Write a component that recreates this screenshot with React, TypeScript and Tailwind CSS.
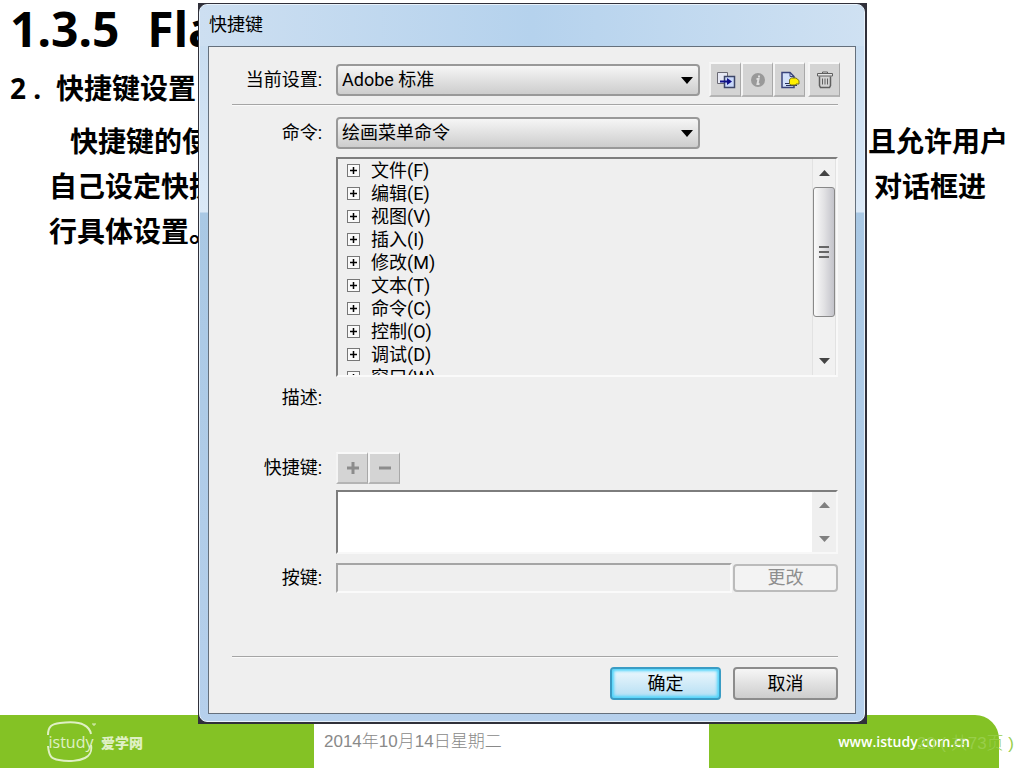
import React, { useState } from "react";

const MENUS = [
  "文件(F)",
  "编辑(E)",
  "视图(V)",
  "插入(I)",
  "修改(M)",
  "文本(T)",
  "命令(C)",
  "控制(O)",
  "调试(D)",
  "窗口(W)",
];

const LABEL = "w-[91px] mr-[13px] pr-px shrink-0 text-right whitespace-nowrap";

const Slide = () => (
  <main className="font-['Noto_Sans','Noto_Sans_CJK_SC',sans-serif] text-[28px] leading-[45px] font-bold text-black whitespace-pre">
    <h1 className="flex gap-7 pl-[10px] text-5xl leading-[58px]">
      <span>1.3.5</span>
      <span>Fla</span>
    </h1>
    <h2 className="mt-2 flex pl-[10px]">
      <span className="w-[46px]">2 .</span>
      <span>快捷键设置</span>
    </h2>
    <div className="mt-2 flex justify-between pl-[70px] pr-4">
      <span>快捷键的使</span>
      <span>且允许用户</span>
    </div>
    <div className="flex justify-between pl-[49px] pr-[38px]">
      <span>自己设定快捷</span>
      <span>对话框进</span>
    </div>
    <div className="pl-[49px]">行具体设置。</div>
  </main>
);

const Logo = () => (
  <div className="ml-[45px] flex items-center text-[#dff0c4]">
    <div className="relative flex h-[42px] w-[52px] items-center justify-center">
      <svg
        className="absolute inset-0"
        width="52"
        height="42"
        viewBox="0 0 52 42"
        fill="none"
        stroke="currentColor"
      >
        <path
          strokeWidth="2"
          d="M3 14 C3 5 7 3 15 2 C24 1 34 1 39 4 C43 6 45 8 46 13 M3 25 C4 35 6 38 14 39 C23 41 34 40 40 37 C46 34 47 30 46 24"
        />
        <path strokeWidth="1" d="M47 3h4M49 3v2" />
      </svg>
      <span className="font-['Open_Sans',sans-serif] text-base leading-5">
        istudy
      </span>
    </div>
    <span className="ml-1 font-['Noto_Sans_CJK_SC',sans-serif] text-sm font-black">
      爱学网
    </span>
  </div>
);

const Footer = () => (
  <footer className="relative mt-auto flex h-[53px] pr-[25px]">
    <div className="flex w-[314px] items-center bg-[#84c225]">
      <Logo />
    </div>
    <div className="flex flex-1 items-center pl-[10px] font-['Liberation_Sans','Noto_Sans_CJK_SC',sans-serif] text-[17px] font-light text-[#898989]">
      2014年10月14日星期二
    </div>
    <div className="flex w-[290px] items-center justify-end rounded-tr-3xl bg-[#84c225] pr-[29px]">
      <a
        href="#"
        className="font-['Open_Sans',sans-serif] text-sm font-semibold text-white"
      >
        www.istudy.com.cn
      </a>
    </div>
    <span className="absolute right-[10px] bottom-[12px] font-['Liberation_Sans','Noto_Sans_CJK_SC',sans-serif] text-[17px] leading-6 font-light whitespace-pre text-[#98ce4a]">
      20 ( 共73页 )
    </span>
  </footer>
);

const DropDown = ({ id, options }: { id: string; options: string[] }) => (
  <div className="relative">
    <select
      id={id}
      className="block h-8 w-[364px] appearance-none rounded-[4px] border-2 border-[#999] bg-linear-to-b from-[#f6f6f6] to-[#cdcdcd] pl-1 outline-none"
    >
      {options.map((o) => (
        <option key={o}>{o}</option>
      ))}
    </select>
    <svg
      className="pointer-events-none absolute top-[13px] right-[7px]"
      width="12"
      height="7"
      viewBox="0 0 12 7"
    >
      <path d="M0 0h12L6 7z" />
    </svg>
  </div>
);

const ToolButton = ({ label, children, disabled }: any) => (
  <button
    aria-label={label}
    disabled={disabled}
    className="flex h-full w-8 items-center justify-center border-t-2 border-r border-b-2 border-l-2 border-t-[#f8f8f8] border-r-[#a8a8a8] border-b-[#b4b4b4] border-l-[#f4f4f4] bg-[#d4d4d4]"
  >
    {children}
  </button>
);

const Arrow = ({ down, color }: { down?: boolean; color: string }) => (
  <svg width="11" height="6" viewBox="0 0 11 6" fill={color}>
    <path d={down ? "M0 0h11L5.5 6z" : "M0 6h11L5.5 0z"} />
  </svg>
);

const Divider = () => (
  <hr className="h-[2px] border-t border-b border-t-[#a5a5a5] border-b-[#fafafa]" />
);

const CommandTree = () => (
  <div className="mt-2 ml-[104px] flex h-[220px] overflow-hidden border-2 border-t-[#7d7d7d] border-r-[#f8f8f8] border-b-[#fafafa] border-l-[#7d7d7d]">
    <ul className="flex-1 pl-[9px]">
      {MENUS.map((name) => (
        <li key={name}>
          <button className="flex h-[23px] items-center gap-[11px] leading-[23px]">
            <svg width="13" height="13" viewBox="0 0 13 13">
              <rect x="0.5" y="0.5" width="12" height="12" fill="#fafafa" stroke="#777" />
              <path d="M3 6.5h7M6.5 3v7" stroke="#000" strokeWidth="1.5" />
            </svg>
            {name}
          </button>
        </li>
      ))}
    </ul>
    <div className="flex w-6 flex-col items-center border-x border-x-[#e2e2e2] bg-[#f1f1f1]">
      <div className="flex h-7 items-center">
        <Arrow color="#444" />
      </div>
      <div className="flex h-[130px] w-[22px] flex-col items-center justify-center gap-[3px] rounded-[3px] border border-[#888] bg-linear-to-r from-[#fafafa] via-[#e2e2e4] to-[#c3c3ca]">
        <i className="h-[2px] w-[10px] bg-[#666]" />
        <i className="h-[2px] w-[10px] bg-[#666]" />
        <i className="h-[2px] w-[10px] bg-[#666]" />
      </div>
      <div className="mt-auto flex h-7 items-center">
        <Arrow down color="#444" />
      </div>
    </div>
  </div>
);

const ShortcutDialog = () => {
  const [shortcuts, setShortcuts] = useState("");

  return (
    <div className="absolute top-[3px] left-[198px] w-[669px] bg-[#30303a] font-['Roboto','Noto_Sans_CJK_SC',sans-serif] text-lg leading-6 text-black">
      <div
        role="dialog"
        aria-labelledby="dialog-title"
        className="m-px mr-[2px] mb-[2px] rounded-[8px] border border-[#e8f2fb] bg-[linear-gradient(to_bottom,#c4daef_0,#dbe9f7_207px,#a9c8e4_208px,#b6d0ec_100%)] px-2 pb-[7px]"
      >
        <div
          id="dialog-title"
          className="-mx-2 h-[41px] rounded-t-[8px] bg-linear-to-r from-[#cddff1] via-[#b5d2ed] to-[#cfe1f2] pt-2 pl-[9px]"
        >
          快捷键
        </div>
        <div className="border border-[#65707c] bg-[#efefef] pt-[15px] pr-[17px] pb-[13px] pl-[23px]">
          <div className="flex h-[35px] items-center">
            <label htmlFor="preset" className={LABEL}>
              当前设置:
            </label>
            <DropDown id="preset" options={["Adobe 标准"]} />
            <div className="ml-[9px] flex h-[35px]">
              <ToolButton label="直接复制设置">
                <svg width="20" height="18" viewBox="0 0 20 18" fill="none">
                  <path d="M1.5 1.5h10v11h-10z" fill="#e6e8f4" stroke="#6a6a74" />
                  <path d="M8.5 5.5h10v11h-10z" fill="#c9d8fa" stroke="#3d4668" strokeWidth="1.5" />
                  <path d="M4 10.500h9" stroke="#10108a" strokeWidth="2" />
                  <path d="M11 7l5 3.500-5 3.500z" fill="#10108a" />
                </svg>
              </ToolButton>
              <ToolButton label="重命名设置" disabled>
                <svg width="16" height="16" viewBox="0 0 16 16">
                  <circle cx="8" cy="8" r="7" fill="#999" />
                  <path
                    d="M9 3.500v2M6.500 7h2l-1 5h2"
                    fill="none"
                    stroke="#dedede"
                    strokeWidth="2"
                  />
                </svg>
              </ToolButton>
              <ToolButton label="将设置导出为 HTML">
                <svg width="20" height="18" viewBox="0 0 20 18">
                  <path
                    d="M2 1.500h8l4 4v11H2z"
                    fill="#d2e0fa"
                    stroke="#39437c"
                    strokeWidth="1.500"
                  />
                  <path d="M10 1.500v4h4" fill="none" stroke="#39437c" />
                  <path d="M5 12.500h6M6 14.500h11" stroke="#26305e" />
                  <path
                    d="M9.500 8.500l2-1.500h4.500l3 2.500v3.500h-3v1h-5l-1.500-1z"
                    fill="#fff000"
                    stroke="#77721a"
                  />
                </svg>
              </ToolButton>
              <div className="ml-[3px]">
                <ToolButton label="删除设置">
                  <svg
                    width="18"
                    height="18"
                    viewBox="0 0 18 18"
                    fill="none"
                    stroke="#606060"
                  >
                    <path d="M6.500 2.500v-1.500h5v1.500M1.500 5V2.500h15V5z" fill="#e6e6e6" />
                    <path d="M3.500 5.500v9l1 2h9l1-2v-9" strokeWidth="1.500" />
                    <path d="M6.500 7.500v6M9 7.500v6M11.500 7.500v6" />
                  </svg>
                </ToolButton>
              </div>
            </div>
          </div>
          <div className="mt-[7px]">
            <Divider />
          </div>
          <div className="mt-[11px] flex items-center">
            <label htmlFor="commands" className={LABEL}>
              命令:
            </label>
            <DropDown id="commands" options={["绘画菜单命令"]} />
          </div>
          <CommandTree />
          <div className="flex h-[42px] items-center">
            <span className={LABEL}>描述:</span>
          </div>
          <div className="mt-[33px] flex h-8 items-center">
            <label htmlFor="shortcuts" className={LABEL}>
              快捷键:
            </label>
            <ToolButton label="添加快捷键" disabled>
              <svg width="12" height="12" viewBox="0 0 12 12" stroke="#8c8c8c" strokeWidth="3">
                <path d="M0 6h12M6 0v12" />
              </svg>
            </ToolButton>
            <ToolButton label="删除快捷键" disabled>
              <svg width="12" height="12" viewBox="0 0 12 12" stroke="#8c8c8c" strokeWidth="3">
                <path d="M0 6h12" />
              </svg>
            </ToolButton>
          </div>
          <div className="mt-[6px] ml-[104px] flex h-16 border-2 border-t-[#7d7d7d] border-r-[#f8f8f8] border-b-[#f8f8f8] border-l-[#7d7d7d] bg-white">
            <textarea
              id="shortcuts"
              value={shortcuts}
              onChange={(e) => setShortcuts(e.target.value)}
              className="flex-1 resize-none outline-none"
            />
            <div className="flex w-6 flex-col items-center justify-between bg-[#efefef] py-[10px]">
              <Arrow color="#808080" />
              <Arrow down color="#808080" />
            </div>
          </div>
          <div className="mt-[9px] flex h-[30px] items-center">
            <label htmlFor="keys" className={LABEL}>
              按键:
            </label>
            <input
              id="keys"
              disabled
              className="mr-px h-full min-w-0 flex-1 border-2 border-t-[#a5a5a5] border-r-[#fafafa] border-b-[#fafafa] border-l-[#a5a5a5]"
            />
            <button
              disabled
              className="h-7 w-[105px] rounded-[4px] border-2 border-[#bbb] bg-[#f3f3f3] text-[#8e8e8e]"
            >
              更改
            </button>
          </div>
          <div className="mt-[63px]">
            <Divider />
          </div>
          <div className="mt-[9px] flex justify-end gap-3">
            <button className="h-[33px] w-[111px] rounded-[4px] border-2 border-[#3a9cc4] bg-linear-to-b from-[#eef8fd] to-[#b4def3] pt-px shadow-[inset_0_0_3px_2px_#4fd4fb]">
              确定
            </button>
            <button className="h-[33px] w-[105px] rounded-[4px] border-2 border-[#8c8c8c] bg-linear-to-b from-[#f6f6f6] to-[#cdcdcd] pt-px">
              取消
            </button>
          </div>
        </div>
      </div>
    </div>
  );
};

const App = () => (
  <div className="relative flex min-h-screen flex-col overflow-hidden bg-white">
    <Slide />
    <Footer />
    <ShortcutDialog />
  </div>
);

export default App;
